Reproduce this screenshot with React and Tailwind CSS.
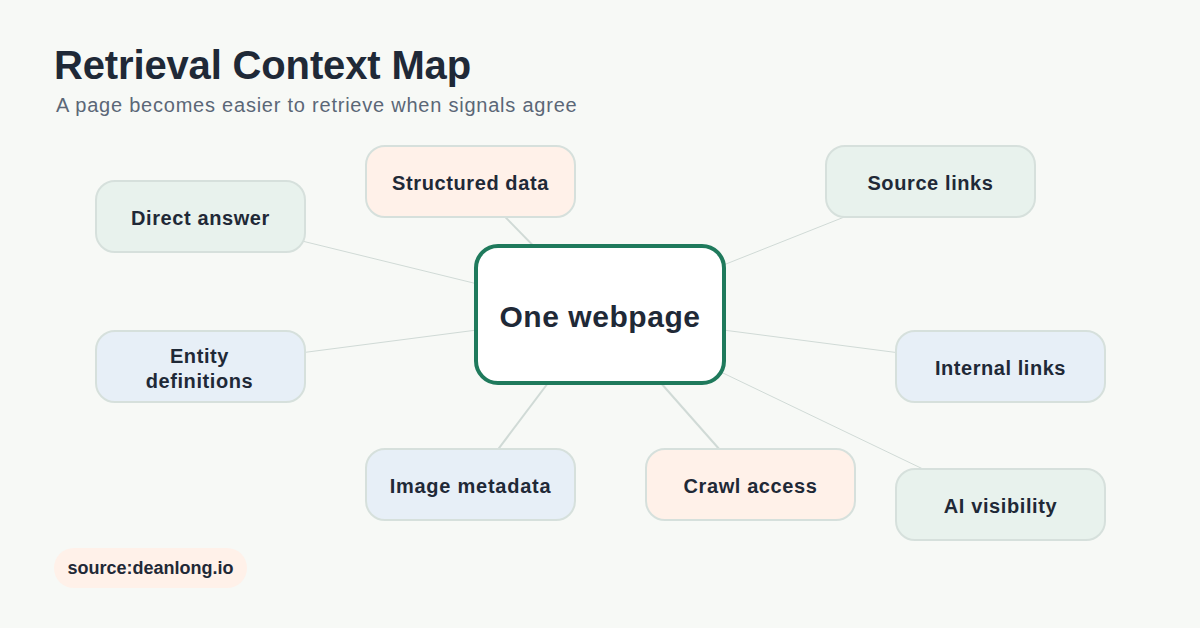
const nodes = [
  { label: "Direct answer", x: 95, y: 180, bg: "bg-[#e8f2ed]", track: "tracking-[0.6px]" },
  { label: "Structured data", x: 365, y: 145, bg: "bg-[#fff1e9]", track: "tracking-[0.6px]" },
  { label: "Source links", x: 825, y: 145, bg: "bg-[#e8f2ed]", track: "tracking-[0.6px]" },
  { label: "Entity definitions", x: 95, y: 330, bg: "bg-[#e7eff7]", track: "tracking-[0.6px]", narrow: true },
  { label: "Internal links", x: 895, y: 330, bg: "bg-[#e7eff7]", track: "tracking-[0.55px]" },
  { label: "Image metadata", x: 365, y: 448, bg: "bg-[#e7eff7]", track: "tracking-[0.75px]" },
  { label: "Crawl access", x: 645, y: 448, bg: "bg-[#fff1e9]", track: "tracking-[0.6px]" },
  { label: "AI visibility", x: 895, y: 468, bg: "bg-[#e8f2ed]", track: "tracking-[0.6px]" },
];

const lines = [
  [200, 216, 1],
  [470, 181, 2],
  [930, 183, 1],
  [200, 366, 1],
  [1000, 366, 1],
  [472, 484, 2],
  [750, 484, 2],
  [1000, 506, 1],
];

export default function App() {
  return (
    <div className="relative w-[1200px] h-[628px] overflow-hidden bg-[#f7f9f6] font-['Liberation_Sans',Arial,sans-serif] text-[#1f2937]">
      <header className="pl-[54px] pt-[42px]">
        <h1 className="text-[40px] leading-[46px] font-bold tracking-[-0.15px]">Retrieval Context Map</h1>
        <p className="pl-[2px] text-[20px] leading-[24px] mt-[5px] tracking-[0.77px] text-[#5b6777]">A page becomes easier to retrieve when signals agree</p>
      </header>

      <svg className="absolute inset-0" width="1200" height="628" viewBox="0 0 1200 628">
        {lines.map(([x, y, w]) => (
          <line key={`${x}-${y}`} x1={x} y1={y} x2="600" y2="314" stroke="#d0dad6" strokeWidth={w} />
        ))}
      </svg>

      {nodes.map((n) => (
        <div
          key={n.label}
          style={{ left: n.x, top: n.y }}
          className={`absolute w-[211px] h-[73px] flex items-center justify-center rounded-[20px] border-2 border-[#d6e0dc] pt-[4px] text-center text-[20px] leading-[25px] font-bold ${n.track} ${n.bg}`}
        >
          <span className={n.narrow ? "w-[120px] -translate-x-px" : ""}>{n.label}</span>
        </div>
      ))}

      <div className="absolute left-[474px] top-[244px] w-[252px] h-[141px] flex items-center justify-center rounded-[24px] border-4 border-[#1f7a5c] bg-white pt-[4px] text-[30px] font-bold tracking-[0.55px]">
        One webpage
      </div>

      <div className="absolute left-[54px] top-[548px] w-[193px] h-[40px] flex items-center justify-center rounded-full bg-[#fff1e9] text-[18px] font-bold">
        source:deanlong.io
      </div>
    </div>
  );
}
